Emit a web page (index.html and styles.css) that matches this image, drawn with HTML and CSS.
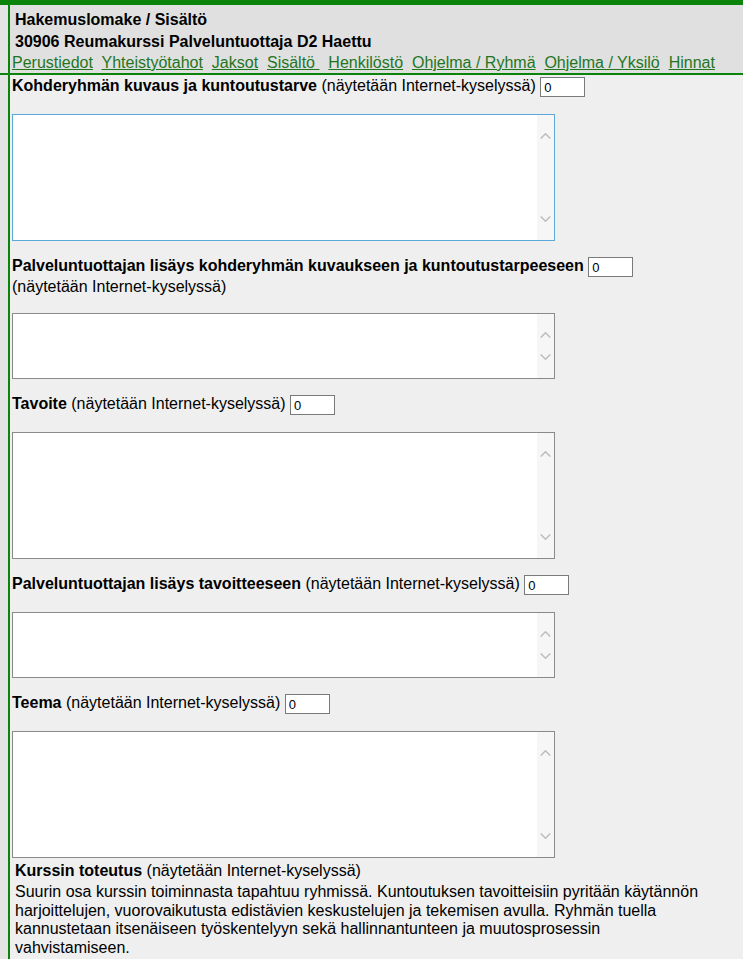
FILE: index.html
```html
<!DOCTYPE html>
<html lang="fi">
<head>
<meta charset="utf-8">
<title>Hakemuslomake / Sisältö</title>
<link rel="stylesheet" href="styles.css">
</head>
<body>
<div class="topbar"></div>
<div class="frame">
  <div class="header">
    <div class="title">Hakemuslomake / Sisältö</div>
    <div class="title">30906 Reumakurssi Palveluntuottaja D2 Haettu</div>
    <div class="nav"><a href="#">Perustiedot</a>&nbsp; <a href="#">Yhteistyötahot</a>&nbsp; <a href="#">Jaksot</a>&nbsp; <a href="#">Sisältö&nbsp;</a>&nbsp; <a href="#">Henkilöstö</a>&nbsp; <a href="#">Ohjelma / Ryhmä</a>&nbsp; <a href="#">Ohjelma / Yksilö</a>&nbsp; <a href="#">Hinnat</a></div>
  </div>
  <div class="rule"></div>
  <div class="content">
    <div class="label first"><b>Kohderyhmän kuvaus ja kuntoutustarve</b> (näytetään Internet-kyselyssä) <input class="num" type="text" value="0"></div>
    <div class="ta tall focus"><textarea class="ta-input"></textarea><div class="sb"><svg class="chev" viewBox="0 0 11 6"><path d="M0.7 5.5 L5.5 0.8 L10.3 5.5"/></svg><svg class="chev" viewBox="0 0 11 6"><path d="M0.7 0.5 L5.5 5.2 L10.3 0.5"/></svg></div></div>

    <div class="label"><b>Palveluntuottajan lisäys kohderyhmän kuvaukseen ja kuntoutustarpeeseen</b> <input class="num" type="text" value="0"><span class="sub">(näytetään Internet-kyselyssä)</span></div>
    <div class="ta short"><textarea class="ta-input"></textarea><div class="sb"><svg class="chev" viewBox="0 0 11 6"><path d="M0.7 5.5 L5.5 0.8 L10.3 5.5"/></svg><svg class="chev" viewBox="0 0 11 6"><path d="M0.7 0.5 L5.5 5.2 L10.3 0.5"/></svg></div></div>

    <div class="label"><b>Tavoite</b> (näytetään Internet-kyselyssä) <input class="num" type="text" value="0"></div>
    <div class="ta tall"><textarea class="ta-input"></textarea><div class="sb"><svg class="chev" viewBox="0 0 11 6"><path d="M0.7 5.5 L5.5 0.8 L10.3 5.5"/></svg><svg class="chev" viewBox="0 0 11 6"><path d="M0.7 0.5 L5.5 5.2 L10.3 0.5"/></svg></div></div>

    <div class="label"><b>Palveluntuottajan lisäys tavoitteeseen</b> (näytetään Internet-kyselyssä) <input class="num" type="text" value="0"></div>
    <div class="ta short"><textarea class="ta-input"></textarea><div class="sb"><svg class="chev" viewBox="0 0 11 6"><path d="M0.7 5.5 L5.5 0.8 L10.3 5.5"/></svg><svg class="chev" viewBox="0 0 11 6"><path d="M0.7 0.5 L5.5 5.2 L10.3 0.5"/></svg></div></div>

    <div class="label"><b>Teema</b> (näytetään Internet-kyselyssä) <input class="num" type="text" value="0"></div>
    <div class="ta tall last"><textarea class="ta-input"></textarea><div class="sb"><svg class="chev" viewBox="0 0 11 6"><path d="M0.7 5.5 L5.5 0.8 L10.3 5.5"/></svg><svg class="chev" viewBox="0 0 11 6"><path d="M0.7 0.5 L5.5 5.2 L10.3 0.5"/></svg></div></div>

    <div class="section">
      <div class="section-title"><b>Kurssin toteutus</b> (näytetään Internet-kyselyssä)</div>
      <p class="section-text">Suurin osa kurssin toiminnasta tapahtuu ryhmissä. Kuntoutuksen tavoitteisiin pyritään käytännön harjoittelujen, vuorovaikutusta edistävien keskustelujen ja tekemisen avulla. Ryhmän tuella kannustetaan itsenäiseen työskentelyyn sekä hallinnantunteen ja muutosprosessin vahvistamiseen.</p>
    </div>
  </div>
</div>
</body>
</html>
```

FILE: styles.css
```css
html, body {
  margin: 0;
  padding: 0;
}
body {
  background: #e4e4e4;
  font-family: "Liberation Sans", Arial, sans-serif;
  font-size: 16px;
  color: #000;
  overflow: hidden;
}
.topbar {
  height: 5px;
  background: #0b840b;
}
.frame {
  margin-left: 8px;
  border-left: 2px solid #0b840b;
  background: #efefef;
  min-height: 954px;
}
.header {
  background: #e0e0e0;
  padding-top: 4px;
}
.title {
  font-weight: bold;
  line-height: 22px;
  padding-left: 5px;
  white-space: nowrap;
}
.nav {
  line-height: 20px;
  padding-left: 2px;
  white-space: nowrap;
}
.nav a {
  color: #1f761f;
  text-decoration: underline;
}
.rule {
  height: 2px;
  margin-left: -10px;
  background: #0b840b;
}
.content {
  padding-left: 2px;
}
.label {
  line-height: normal;
  margin-top: 16px;
}
.label.first {
  margin-top: 2px;
}
.sub {
  display: block;
  line-height: 19px;
}
.num {
  box-sizing: border-box;
  width: 45px;
  height: 20px;
  border: 1px solid #7a7a7a;
  background: #fff;
  font-family: "Liberation Sans", Arial, sans-serif;
  font-size: 13px;
  padding: 0 3px;
  margin: 0;
  vertical-align: middle;
  color: #000;
}
.ta {
  box-sizing: border-box;
  width: 543px;
  display: flex;
  border: 1px solid #8a8a8a;
  background: #fff;
  margin-top: 17px;
}
.ta.tall {
  height: 127px;
}
.ta.short {
  height: 66px;
}
.ta.focus {
  border-color: #5aa9d6;
}
.ta-input {
  flex: 1;
  border: 0;
  outline: none;
  resize: none;
  margin: 0;
  padding: 2px;
  background: #fff;
  font-family: "Liberation Sans", Arial, sans-serif;
  font-size: 13px;
}
.sb {
  width: 17px;
  background: #f6f6f7;
  display: flex;
  flex-direction: column;
  justify-content: space-between;
  align-items: center;
  padding: 18px 0;
  box-sizing: border-box;
}
.chev {
  width: 11px;
  height: 6px;
  display: block;
}
.chev path {
  fill: none;
  stroke: #bdbdbd;
  stroke-width: 1.5;
}
.section {
  margin-top: 4px;
  padding-left: 3px;
  padding-right: 35px;
}
.section-title {
  line-height: normal;
}
.section-text {
  margin: 3px 0 0 0;
  line-height: 18.7px;
}
```
